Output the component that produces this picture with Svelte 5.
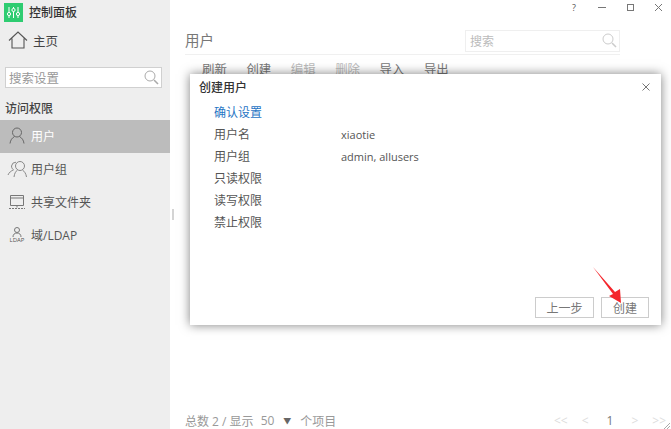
<script>
	const navItems = [
		{ label: '用户', icon: 'user', active: true },
		{ label: '用户组', icon: 'group' },
		{ label: '共享文件夹', icon: 'folder' },
		{ label: '域/LDAP', icon: 'ldap' }
	];
	const tools = [
		{ label: '刷新' },
		{ label: '创建' },
		{ label: '编辑', disabled: true },
		{ label: '删除', disabled: true },
		{ label: '导入' },
		{ label: '导出' }
	];
	const rows = [
		{ key: '用户名', value: 'xiaotie' },
		{ key: '用户组', value: 'admin, allusers' },
		{ key: '只读权限', value: '' },
		{ key: '读写权限', value: '' },
		{ key: '禁止权限', value: '' }
	];
</script>

<div class="window">
	<aside class="sidebar">
		<div class="brand">
			<span class="logo">
				<svg width="19" height="19" viewBox="0 0 19 19" fill="none" stroke="#fff" stroke-width="1">
					<path d="M5 4v11M9.500 4v11M14 4v11" />
					<circle cx="5" cy="11" r="1.600" fill="#2ecc71" />
					<circle cx="9.500" cy="7" r="1.600" fill="#2ecc71" />
					<circle cx="14" cy="11" r="1.600" fill="#2ecc71" />
				</svg>
			</span>
			<span>控制面板</span>
		</div>
		<div class="home">
			<svg width="20" height="18" viewBox="0 0 20 18" fill="none" stroke="#555" stroke-width="1.100">
				<path d="M1 9.500 10 1l9 8.500M4 7.500V17h12V7.500" />
			</svg>
			<span>主页</span>
		</div>
		<div class="side-search">
			<span>搜索设置</span>
			<svg width="15" height="15" viewBox="0 0 15 15" fill="none" stroke="#aaa" stroke-width="1">
				<circle cx="6" cy="6" r="5" />
				<path d="m10 10 4 4" stroke-width="1.600" />
			</svg>
		</div>
		<div class="section">访问权限</div>
		<nav>
			{#each navItems as item}
				<div class="nav-item" class:active={item.active}>
					<span class="nav-icon">
						{#if item.icon === 'user'}
							<svg width="16" height="17" viewBox="0 0 16 17" fill="none" stroke="#666" stroke-width="1">
								<circle cx="8" cy="5.500" r="4.500" />
								<path d="M5.500 9.500C3 11 1.500 13 1 16.500M10.500 9.500c2.500 1.500 4 3.500 4.500 7" />
							</svg>
						{:else if item.icon === 'group'}
							<svg width="20" height="18" viewBox="0 0 20 18" fill="none" stroke="#888" stroke-width="1">
								<circle cx="13" cy="6" r="4.500" />
								<path d="M10.500 10C8.500 11.500 7.500 13.500 7 17M15.500 10c2 1.500 3.500 3.500 4 7" />
								<path d="M9 2.200A4.500 4.500 0 0 0 4.500 6c0 1.700.8 3 2 3.800C4 11 2 12.500 1 15" />
							</svg>
						{:else if item.icon === 'folder'}
							<svg width="18" height="16" viewBox="0 0 18 16" fill="none" stroke="#777" stroke-width="1">
								<path d="M2.500 11.500V1.500h13v10zM2.500 4h13" />
								<path d="M9 11.500v2.500M1 14.500h16" stroke-dasharray="2 1" />
							</svg>
						{:else}
							<span class="ldap">
								<svg width="10" height="10" viewBox="0 0 10 10" fill="none" stroke="#777" stroke-width="1">
									<circle cx="5" cy="3" r="2.500" />
									<path d="M1 10c0-2.500 1.500-4 4-4s4 1.500 4 4" />
								</svg>
								<b>LDAP</b>
							</span>
						{/if}
					</span>
					<span>{item.label}</span>
				</div>
			{/each}
		</nav>
	</aside>

	<div class="splitter"></div>

	<main class="main">
		<div class="win-controls">
			<span class="help">?</span>
			<svg width="9" height="9" viewBox="0 0 9 9" stroke="#777" fill="none"><path d="M0 4.500h8" /></svg>
			<svg width="9" height="9" viewBox="0 0 9 9" stroke="#777" fill="none"><rect x="1.500" y="1.500" width="6" height="6" /></svg>
			<svg width="9" height="9" viewBox="0 0 9 9" stroke="#777" fill="none"><path d="m1 1 7 7M8 1 1 8" /></svg>
		</div>
		<div class="head">
			<h1>用户</h1>
			<div class="search">
				<span>搜索</span>
				<svg width="15" height="15" viewBox="0 0 15 15" fill="none" stroke="#ccc" stroke-width="1">
					<circle cx="6" cy="6" r="5" />
					<path d="m10 10 4 4" stroke-width="1.600" />
				</svg>
			</div>
		</div>
		<div class="toolbar">
			{#each tools as tool}
				<span class:disabled={tool.disabled}>{tool.label}</span>
			{/each}
		</div>
		<div class="spacer"></div>
		<footer>
			<div class="count">
				<span>总数 2 / 显示</span>
				<span>50</span>
				<span class="caret">▼</span>
				<span>个项目</span>
			</div>
			<div class="pager">
				<span class="faint">&lt;&lt;</span>
				<span class="faint">&lt;</span>
				<span class="page">1</span>
				<span class="faint">&gt;</span>
				<span class="faint">&gt;&gt;</span>
			</div>
		</footer>
	</main>

	<section class="modal">
		<div class="modal-head">
			<span>创建用户</span>
			<svg width="8" height="8" viewBox="0 0 8 8" stroke="#777" fill="none"><path d="m.5.500 7 7M7.500.500l-7 7" /></svg>
		</div>
		<div class="modal-body">
			<div class="step">确认设置</div>
			{#each rows as row}
				<div class="row">
					<span class="key">{row.key}</span>
					<span class="value">{row.value}</span>
				</div>
			{/each}
		</div>
		<div class="modal-foot">
			<button>上一步</button>
			<button class="create">创建</button>
		</div>
	</section>

	<svg class="arrow" width="30" height="38" viewBox="0 0 30 38">
		<path d="M0 1 22 26 27 23 28 37 16 30 20 28z" fill="#f4262c" />
	</svg>

	<svg class="grip" width="6" height="6" viewBox="0 0 6 6" fill="none" stroke="#aaa">
		<path d="M0 6 6 0M3 6l3-3" />
	</svg>
</div>

<style>
	:global(body) {
		margin: 0;
		background: #fff;
	}

	.window {
		position: relative;
		display: flex;
		width: 671px;
		height: 429px;
		overflow: hidden;
		font-family: "Open Sans", "Noto Sans CJK SC", sans-serif;
		font-size: 12px;
		color: #555;
	}

	.sidebar {
		width: 170px;
		flex-shrink: 0;
		background: #eeeeee;
		display: flex;
		flex-direction: column;
	}

	.brand {
		display: flex;
		align-items: center;
		gap: 6px;
		height: 24px;
		padding-left: 4px;
		color: #333;
		font-weight: 500;
	}

	.logo {
		display: flex;
		width: 19px;
		height: 19px;
		background: #2ecc71;
	}

	.home {
		display: flex;
		align-items: center;
		gap: 5px;
		height: 32px;
		padding-left: 8px;
		font-size: 12.500px;
		color: #444;
	}

	.side-search {
		display: flex;
		align-items: center;
		justify-content: space-between;
		box-sizing: border-box;
		width: 157px;
		height: 21px;
		margin: 11px 0 0 5px;
		padding: 0 2px 0 3px;
		background: #fff;
		border: 1px solid #d0d0d0;
		color: #999;
		font-size: 12.500px;
	}

	.section {
		height: 22px;
		margin-top: 10px;
		padding-left: 5px;
		line-height: 22px;
		font-weight: 500;
		color: #444;
	}

	.nav-item {
		display: flex;
		align-items: center;
		box-sizing: border-box;
		height: 33px;
		padding-bottom: 2px;
		font-size: 12px;
		color: #555;
	}

	.nav-item.active {
		background: #bcbcbc;
		color: #fff;
	}

	.nav-icon {
		display: flex;
		justify-content: center;
		width: 24px;
		margin: 0 2px 0 5px;
	}

	.ldap {
		display: flex;
		flex-direction: column;
		align-items: center;
		line-height: 6px;
	}

	.ldap b {
		font-size: 6px;
		font-weight: 400;
	}

	.splitter {
		align-self: center;
		flex-shrink: 0;
		width: 2px;
		height: 11px;
		margin: 0 0 0 2px;
		background: #d4d4d4;
	}

	.main {
		flex: 1;
		display: flex;
		flex-direction: column;
		padding: 0 0 0 11px;
		min-width: 0;
	}

	.win-controls {
		display: flex;
		justify-content: flex-end;
		align-items: center;
		gap: 19px;
		height: 14px;
		padding-right: 8px;
	}

	.help {
		font-size: 9px;
		margin-right: 3px;
	}

	.head {
		display: flex;
		align-items: center;
		justify-content: space-between;
		box-sizing: border-box;
		width: 435px;
		height: 41px;
		padding-top: 13px;
		border-bottom: 1px solid #f0f0f0;
	}

	h1 {
		margin: 0 0 2px;
		font-size: 14.500px;
		font-weight: 400;
		color: #777;
	}

	.search {
		display: flex;
		align-items: center;
		justify-content: space-between;
		box-sizing: border-box;
		width: 155px;
		height: 22px;
		padding: 0 2px 0 4px;
		border: 1px solid #efefef;
		color: #bbb;
	}

	.toolbar {
		display: flex;
		gap: 19.600px;
		padding: 5px 0 0 17px;
		font-size: 12.400px;
		color: #777;
	}

	.toolbar .disabled {
		color: #bbb;
	}

	.spacer {
		flex: 1;
	}

	footer {
		display: flex;
		justify-content: space-between;
		align-items: center;
		height: 15px;
		padding-bottom: 1px;
		color: #999;
	}

	.count {
		display: flex;
		gap: 7px;
	}

	.caret {
		font-size: 8px;
		line-height: 17px;
		color: #666;
		margin: 0 2px;
	}

	.pager {
		display: flex;
		gap: 14px;
		padding-right: 5px;
	}

	.faint {
		color: #ddd;
	}

	.page {
		color: #777;
		margin: 0 4px;
	}

	.modal {
		position: absolute;
		left: 190px;
		top: 74px;
		box-sizing: border-box;
		width: 471px;
		height: 251px;
		display: flex;
		flex-direction: column;
		background: #fff;
		box-shadow: 0 0 10px rgba(0, 0, 0, 0.5);
	}

	.modal-head {
		display: flex;
		justify-content: space-between;
		align-items: center;
		height: 25px;
		padding: 0 11px 3px 9px;
		color: #333;
		font-weight: 500;
	}

	.modal-body {
		flex: 1;
		padding-left: 24px;
	}

	.step {
		height: 22px;
		line-height: 22px;
		color: #1f75c4;
	}

	.row {
		display: flex;
		height: 22px;
		line-height: 22px;
	}

	.key {
		width: 127px;
	}

	.value {
		font-size: 11px;
		color: #555;
	}

	.modal-foot {
		display: flex;
		justify-content: flex-end;
		gap: 7px;
		padding: 0 12px 7px 0;
	}

	button {
		width: 59px;
		height: 21px;
		padding: 0;
		background: #fff;
		border: 1px solid #ccc;
		font: inherit;
		color: #777;
	}

	.create {
		width: 48px;
	}

	.arrow {
		position: absolute;
		left: 593px;
		top: 266px;
	}

	.grip {
		position: absolute;
		right: 1px;
		bottom: 0;
	}
</style>
